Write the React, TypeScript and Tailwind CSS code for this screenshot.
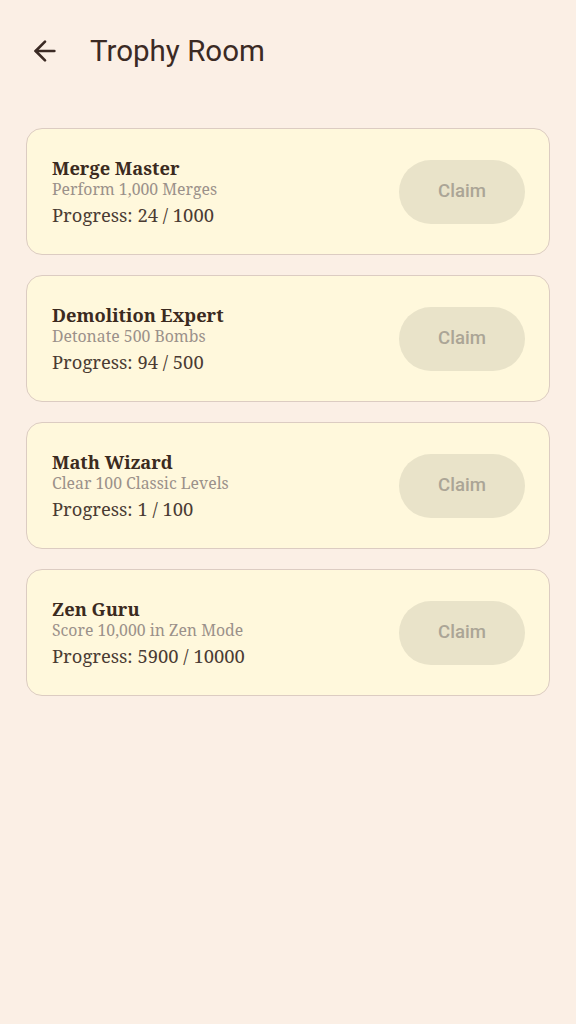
import { ArrowLeft } from "lucide-react";

type Trophy = {
  title: string;
  detail: string;
  progress: number;
  goal: number;
};

const TROPHIES: Trophy[] = [
  { title: "Merge Master", detail: "Perform 1,000 Merges", progress: 24, goal: 1000 },
  { title: "Demolition Expert", detail: "Detonate 500 Bombs", progress: 94, goal: 500 },
  { title: "Math Wizard", detail: "Clear 100 Classic Levels", progress: 1, goal: 100 },
  { title: "Zen Guru", detail: "Score 10,000 in Zen Mode", progress: 5900, goal: 10000 },
];

const SERIF = "font-['Noto_Serif','DejaVu_Serif','Liberation_Serif',serif]";

export default function App() {
  return (
    <div className="min-h-[1024px] w-full bg-[#fbefe5] font-['Roboto',sans-serif]">
      <header className="flex h-[102px] items-center pl-[29px]">
        <ArrowLeft className="h-[32px] w-[32px] text-[#3b2a24]" strokeWidth={2} />
        <h1 className="ml-[29px] text-[29.5px] text-[#3b2a24]">Trophy Room</h1>
      </header>
      <div className="mt-[26px] flex flex-col gap-[20px] px-[26px]">
        {TROPHIES.map((t) => (
          <div
            key={t.title}
            className="flex h-[127px] items-center justify-between rounded-[16px] border border-[#dcccc2] bg-[#fff8dc] pl-[25px] pr-[24px]"
          >
            <div className={`flex flex-col ${SERIF}`}>
              <h3 className="text-[18.3px] font-bold leading-[22px] text-[#3b2a20]">{t.title}</h3>
              <p className="text-[15.8px] leading-[20px] text-[#9b918a]">{t.detail}</p>
              <p className="mt-[4px] text-[18.4px] leading-[24px] text-[#4a3b33]">
                Progress: {t.progress} / {t.goal}
              </p>
            </div>
            <button
              disabled
              className="h-[64px] w-[126px] rounded-full bg-[#e9e3c9] text-[18.6px] font-medium text-[#aba596]"
            >
              Claim
            </button>
          </div>
        ))}
      </div>
    </div>
  );
}
